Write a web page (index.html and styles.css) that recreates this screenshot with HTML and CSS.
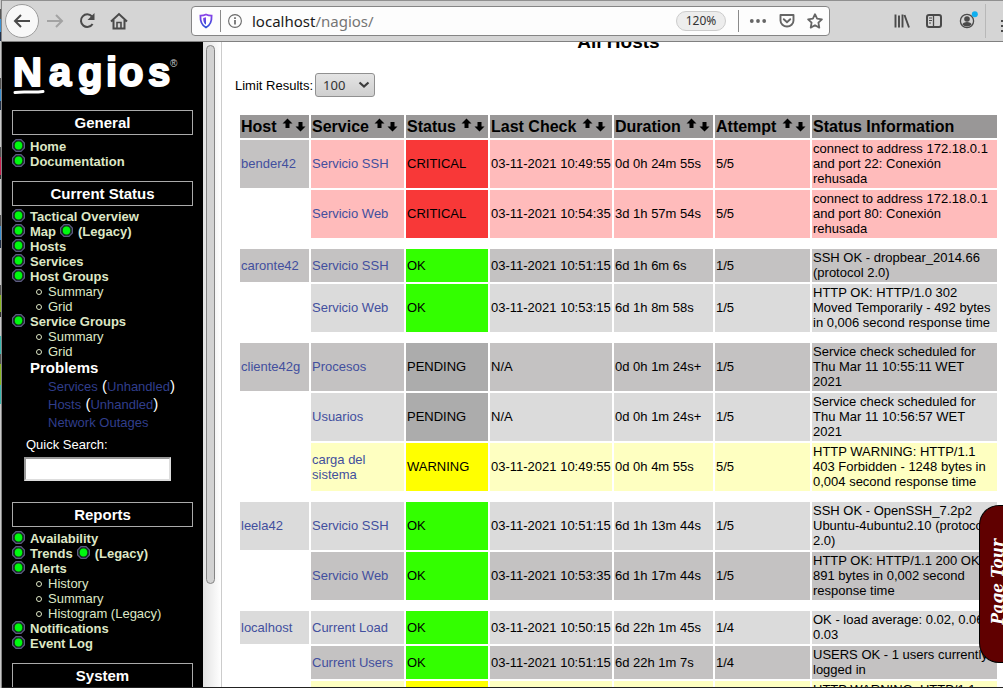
FILE: index.html
```html
<!DOCTYPE html>
<html lang="en">
<head>
<meta charset="utf-8">
<title>Nagios: localhost</title>
<link rel="stylesheet" href="styles.css">
</head>
<body>
<svg class="defs" width="0" height="0" aria-hidden="true">
  <defs>
    <symbol id="dot" viewBox="0 0 13 13">
      <path d="M4 0.600H9L12.400 4V9L9 12.400H4L0.600 9V4Z" fill="#1c1c2c" stroke="#5c5c80" stroke-width="1.200"/>
      <circle cx="6.500" cy="6.500" r="4.600" fill="#064a08"/>
      <ellipse cx="6.500" cy="6.500" rx="3.700" ry="4" fill="#00f810"/>
    </symbol>
    <symbol id="up" viewBox="0 0 11 11"><path d="M5.5 0.5L10.5 5.5H7.5V10H3.5V5.5H0.5Z" fill="#000"/></symbol>
    <symbol id="down" viewBox="0 0 11 11"><path d="M5.5 10.5L10.5 5.5H7.5V1H3.5V5.5H0.5Z" fill="#000"/></symbol>
  </defs>
</svg>
<div class="desktop-edge"></div>
<div class="window">
  <header class="toolbar">
    <div class="nav-buttons">
      <button class="back" aria-label="Back"><svg width="18" height="18" viewBox="0 0 18 18"><path d="M17 9H2M8 3L2 9l6 6" fill="none" stroke="#4a4a4a" stroke-width="2"/></svg></button>
      <button class="tool" aria-label="Forward"><svg width="18" height="18" viewBox="0 0 18 18"><path d="M1 9h15M10 3l6 6-6 6" fill="none" stroke="#a3a3a3" stroke-width="2"/></svg></button>
      <button class="tool" aria-label="Reload"><svg width="18" height="18" viewBox="0 0 18 18"><path d="M14 4.500A6.300 6.300 0 1 0 14.600 12" fill="none" stroke="#4a4a4a" stroke-width="2"/><path d="M16.500 1v7h-7z" fill="#4a4a4a"/></svg></button>
      <button class="tool" aria-label="Home"><svg width="18" height="18" viewBox="0 0 18 18"><path d="M1 9.500L9 2l8 7.500M3.500 8v8.500h11V8" fill="none" stroke="#4a4a4a" stroke-width="2"/><path d="M7 16v-5.500h4V16" fill="none" stroke="#4a4a4a" stroke-width="1.600"/></svg></button>
    </div>
    <div class="urlbar">
      <svg width="14" height="16" viewBox="0 0 14 16"><defs><linearGradient id="sh" x1="0" y1="0" x2="0" y2="1"><stop offset="0" stop-color="#8a42e8"/><stop offset="1" stop-color="#2c50d8"/></linearGradient></defs><path d="M7 1.500C9 2.400 11 2.600 12.600 2.600C12.800 8 12 12 7 14.500C2 12 1.200 8 1.400 2.600C3 2.600 5 2.400 7 1.500Z" fill="#fff" stroke="url(#sh)" stroke-width="1.800"/><path d="M7 4.300v7.500C4.500 10 4.200 8 4.200 5Z" fill="url(#sh)"/></svg>
      <span class="rule"></span>
      <svg class="info-icon" width="14" height="14" viewBox="0 0 14 14"><circle cx="7" cy="7" r="6.400" fill="none" stroke="#6a6a6a" stroke-width="1.100"/><path d="M7 6v4.500M7 3.200v1.700" stroke="#6a6a6a" stroke-width="1.700"/></svg>
      <span class="url">localhost<span class="path">/nagios/</span></span>
      <button class="zoom">120%</button>
      <span class="rule"></span>
      <button class="tool dots" aria-label="Page actions"><svg width="18" height="16" viewBox="0 0 18 16"><g fill="#666"><circle cx="2.800" cy="8" r="1.900"/><circle cx="9" cy="8" r="1.900"/><circle cx="15.200" cy="8" r="1.900"/></g></svg></button>
      <button class="tool" aria-label="Save to Pocket"><svg width="16" height="16" viewBox="0 0 16 16"><path d="M1.500 2h13v5.500a6.500 6 0 0 1-13 0z" fill="none" stroke="#666" stroke-width="1.900" stroke-linejoin="round"/><path d="M4.800 6.200L8 9.200l3.200-3" fill="none" stroke="#666" stroke-width="1.900" stroke-linecap="round"/></svg></button>
      <button class="tool" aria-label="Bookmark"><svg width="16" height="16" viewBox="0 0 16 16"><path d="M8 1.200l2.100 4.500 4.800.6-3.500 3.400.9 4.900L8 12.200l-4.300 2.400.9-4.900L1.100 6.300l4.800-.6z" fill="none" stroke="#666" stroke-width="1.800" stroke-linejoin="round"/></svg></button>
    </div>
    <div class="menu-buttons">
      <button class="tool" aria-label="Library"><svg width="16" height="16" viewBox="0 0 16 16"><path d="M1.500 1.500v13M5 2.500v12M8.500 1.500v13M10.500 2l4.500 12.500" stroke="#4a4a4a" stroke-width="1.900" fill="none"/></svg></button>
      <button class="tool" aria-label="Sidebars"><svg width="16" height="16" viewBox="0 0 16 16"><rect x="1" y="2" width="14" height="12" rx="2" fill="none" stroke="#4a4a4a" stroke-width="2"/><path d="M7.500 2v12" stroke="#4a4a4a" stroke-width="1.300"/><path d="M3 5h3M3 7.500h3M3 10h2" stroke="#4a4a4a"/></svg></button>
      <button class="tool" aria-label="Account"><svg width="20" height="20" viewBox="0 0 20 20"><circle cx="9" cy="10" r="6.600" fill="none" stroke="#4a4a4a" stroke-width="1.300"/><circle cx="9" cy="8" r="2.800" fill="#4a4a4a"/><path d="M4.500 13.500c0-3.500 9-3.500 9 0C11.500 16 6.500 16 4.500 13.500z" fill="#4a4a4a"/><circle cx="16.800" cy="3.300" r="3" fill="#10aff0"/></svg></button>
      <button class="tool more" aria-label="Menu"><svg width="10" height="16" viewBox="0 0 10 16"><path d="M0 3h10M0 8h10M0 13h10" stroke="#4a4a4a" stroke-width="2"/></svg></button>
    </div>
  </header>

  <div class="frames">
    <nav class="side">
      <a class="logo" href="#"><svg width="170" height="50" viewBox="0 0 170 50" role="img" aria-label="Nagios">
        <g fill="#fff" stroke="#fff" stroke-width="2" stroke-linejoin="round" font-family="Liberation Sans, Arial, sans-serif" font-weight="bold">
          <text y="32" font-size="40" x="1 37 66 94 107 136">Nagios</text>
        </g>
        <path d="M3 38.500C12 37 20 39 31 37.500" stroke="#fff" stroke-width="3" stroke-linecap="round" fill="none"/>
        <text x="158" y="13" fill="#ccc" font-size="10" font-family="Liberation Sans, Arial, sans-serif">®</text>
      </svg></a>

      <h2>General</h2>
      <ul class="links">
        <li><svg class="dot"><use href="#dot"/></svg><a href="#">Home</a></li>
        <li><svg class="dot"><use href="#dot"/></svg><a href="#">Documentation</a></li>
      </ul>

      <h2>Current Status</h2>
      <ul class="links status-links">
        <li><svg class="dot"><use href="#dot"/></svg><a href="#">Tactical Overview</a></li>
        <li><svg class="dot"><use href="#dot"/></svg><a href="#">Map</a><svg class="dot inner"><use href="#dot"/></svg><a href="#">(Legacy)</a></li>
        <li><svg class="dot"><use href="#dot"/></svg><a href="#">Hosts</a></li>
        <li><svg class="dot"><use href="#dot"/></svg><a href="#">Services</a></li>
        <li><svg class="dot"><use href="#dot"/></svg><a href="#">Host Groups</a></li>
        <li class="sub"><i></i><a href="#">Summary</a></li>
        <li class="sub"><i></i><a href="#">Grid</a></li>
        <li><svg class="dot"><use href="#dot"/></svg><a href="#">Service Groups</a></li>
        <li class="sub"><i></i><a href="#">Summary</a></li>
        <li class="sub"><i></i><a href="#">Grid</a></li>
      </ul>
      <h3>Problems</h3>
      <ul class="problems">
        <li><a href="#">Services</a> (<a href="#">Unhandled</a>)</li>
        <li><a href="#">Hosts</a> (<a href="#">Unhandled</a>)</li>
        <li><a href="#">Network Outages</a></li>
      </ul>
      <form class="search">
        <label for="q">Quick Search:</label>
        <input id="q" type="text">
      </form>

      <h2>Reports</h2>
      <ul class="links">
        <li><svg class="dot"><use href="#dot"/></svg><a href="#">Availability</a></li>
        <li><svg class="dot"><use href="#dot"/></svg><a href="#">Trends</a><svg class="dot inner"><use href="#dot"/></svg><a href="#">(Legacy)</a></li>
        <li><svg class="dot"><use href="#dot"/></svg><a href="#">Alerts</a></li>
        <li class="sub"><i></i><a href="#">History</a></li>
        <li class="sub"><i></i><a href="#">Summary</a></li>
        <li class="sub"><i></i><a href="#">Histogram (Legacy)</a></li>
        <li><svg class="dot"><use href="#dot"/></svg><a href="#">Notifications</a></li>
        <li><svg class="dot"><use href="#dot"/></svg><a href="#">Event Log</a></li>
      </ul>

      <h2>System</h2>
    </nav>
    <div class="scroll"><div class="thumb"></div></div>

    <main class="content">
      <h1>All Hosts</h1>
      <div class="limit">
        <label for="limit">Limit Results:</label>
        <span class="picker">
          <select id="limit"><option>100</option></select>
          <svg width="12" height="8" viewBox="0 0 12 8"><path d="M1.500 1.500L6 5.500l4.500-4" fill="none" stroke="#3c3c3c" stroke-width="2.200"/></svg>
        </span>
      </div>

      <div class="table-wrap">
      <table>
        <colgroup><col class="c-host"><col class="c-service"><col class="c-status"><col class="c-check"><col class="c-duration"><col class="c-attempt"><col></colgroup>
        <thead>
          <tr>
            <th>Host <svg class="up"><use href="#up"/></svg><svg class="down"><use href="#down"/></svg></th>
            <th>Service <svg class="up"><use href="#up"/></svg><svg class="down"><use href="#down"/></svg></th>
            <th>Status <svg class="up"><use href="#up"/></svg><svg class="down"><use href="#down"/></svg></th>
            <th>Last Check <svg class="up"><use href="#up"/></svg><svg class="down"><use href="#down"/></svg></th>
            <th>Duration <svg class="up"><use href="#up"/></svg><svg class="down"><use href="#down"/></svg></th>
            <th>Attempt <svg class="up"><use href="#up"/></svg><svg class="down"><use href="#down"/></svg></th>
            <th>Status Information</th>
          </tr>
        </thead>
        <tbody>
          <tr class="critical"><td class="even"><a href="#">bender42</a></td><td><a href="#">Servicio SSH</a></td><td class="state">CRITICAL</td><td>03-11-2021 10:49:55</td><td>0d 0h 24m 55s</td><td>5/5</td><td class="text">connect to address 172.18.0.1 and port 22: Conexión rehusada</td></tr>
          <tr class="critical"><td class="none"></td><td><a href="#">Servicio Web</a></td><td class="state">CRITICAL</td><td>03-11-2021 10:54:35</td><td>3d 1h 57m 54s</td><td>5/5</td><td class="text">connect to address 172.18.0.1 and port 80: Conexión rehusada</td></tr>
          <tr class="gap"><td colspan="7"></td></tr>
          <tr class="even ok"><td><a href="#">caronte42</a></td><td><a href="#">Servicio SSH</a></td><td class="state">OK</td><td>03-11-2021 10:51:15</td><td>6d 1h 6m 6s</td><td>1/5</td><td class="text">SSH OK - dropbear_2014.66 (protocol 2.0)</td></tr>
          <tr class="odd ok"><td class="none"></td><td><a href="#">Servicio Web</a></td><td class="state">OK</td><td>03-11-2021 10:53:15</td><td>6d 1h 8m 58s</td><td>1/5</td><td class="text">HTTP OK: HTTP/1.0 302 Moved Temporarily - 492 bytes in 0,006 second response time</td></tr>
          <tr class="gap"><td colspan="7"></td></tr>
          <tr class="even pending"><td><a href="#">cliente42g</a></td><td><a href="#">Procesos</a></td><td class="state">PENDING</td><td>N/A</td><td>0d 0h 1m 24s+</td><td>1/5</td><td class="text">Service check scheduled for Thu Mar 11 10:55:11 WET 2021</td></tr>
          <tr class="odd pending"><td class="none"></td><td><a href="#">Usuarios</a></td><td class="state">PENDING</td><td>N/A</td><td>0d 0h 1m 24s+</td><td>1/5</td><td class="text">Service check scheduled for Thu Mar 11 10:56:57 WET 2021</td></tr>
          <tr class="warning"><td class="none"></td><td class="text"><a href="#">carga del sistema</a></td><td class="state">WARNING</td><td>03-11-2021 10:49:55</td><td>0d 0h 4m 55s</td><td>5/5</td><td class="text">HTTP WARNING: HTTP/1.1 403 Forbidden - 1248 bytes in 0,004 second response time</td></tr>
          <tr class="gap"><td colspan="7"></td></tr>
          <tr class="odd ok"><td><a href="#">leela42</a></td><td><a href="#">Servicio SSH</a></td><td class="state">OK</td><td>03-11-2021 10:51:15</td><td>6d 1h 13m 44s</td><td>1/5</td><td class="text">SSH OK - OpenSSH_7.2p2 Ubuntu-4ubuntu2.10 (protocol 2.0)</td></tr>
          <tr class="even ok"><td class="none"></td><td><a href="#">Servicio Web</a></td><td class="state">OK</td><td>03-11-2021 10:53:35</td><td>6d 1h 17m 44s</td><td>1/5</td><td class="text">HTTP OK: HTTP/1.1 200 OK - 891 bytes in 0,002 second response time</td></tr>
          <tr class="gap"><td colspan="7"></td></tr>
          <tr class="odd ok"><td><a href="#">localhost</a></td><td><a href="#">Current Load</a></td><td class="state">OK</td><td>03-11-2021 10:50:15</td><td>6d 22h 1m 45s</td><td>1/4</td><td class="text">OK - load average: 0.02, 0.06, 0.03</td></tr>
          <tr class="even ok"><td class="none"></td><td><a href="#">Current Users</a></td><td class="state">OK</td><td>03-11-2021 10:51:15</td><td>6d 22h 1m 7s</td><td>1/4</td><td class="text">USERS OK - 1 users currently logged in</td></tr>
          <tr class="warning"><td class="none"></td><td></td><td class="state"></td><td></td><td></td><td></td><td class="text">HTTP WARNING: HTTP/1.1 403 Forbidden</td></tr>
        </tbody>
      </table>
      </div>
      <button class="tour"><span>Page Tour</span></button>
    </main>
  </div>
</div>
</body>
</html>
```
FILE: styles.css
```css
* { box-sizing: border-box; }

body {
  margin: 0;
  display: flex;
  height: 100vh;
  overflow: hidden;
  background: #fff;
  color: #000;
  font: 13px/15px "Liberation Sans", Arial, sans-serif;
}

button { margin: 0; padding: 0; border: 0; background: none; font: inherit; color: inherit; }
svg { display: block; }
a { text-decoration: none; }
ul { list-style: none; margin: 0; padding: 0; }
.defs { position: absolute; }

/* slice of the launcher showing beside the window */
.desktop-edge {
  flex: none;
  width: 2px;
  border-right: 1px solid #858585;
  background: linear-gradient(#c9c9c9 0 9px, #555 9px 19px, #3a8fd0 19px 32px, #20304a 32px 41px,
    #c9c9c9 41px 78px, #555 78px 89px, #3a8fd0 89px 101px, #20304a 101px 110px,
    #c9c9c9 110px 147px, #555 147px 157px, #cc2050 157px 175px, #333 175px 179px,
    #c9c9c9 179px 215px, #555 215px 226px, #3a8fd0 226px 240px, #20304a 240px 248px,
    #c9c9c9 248px 285px, #555 285px 295px, #8ab820 295px 312px, #333 312px 317px,
    #c9c9c9 317px 336px, #38b8b0 336px 354px, #555 354px 364px, #8ab820 364px 385px,
    #38b8b0 385px 404px, #c9c9c9 404px);
}

.window { flex: 1; min-width: 0; display: flex; flex-direction: column; border-bottom: 1px solid #222; }

.toolbar {
  flex: none;
  display: flex;
  align-items: center;
  height: 42px;
  padding-left: 3px;
  border-top: 1px solid #909090;
  border-bottom: 1px solid #808080;
  background: #d5d5d5;
}
.nav-buttons { display: flex; align-items: center; gap: 14px; margin-right: 63px; }
.back {
  display: grid;
  place-items: center;
  width: 34px;
  height: 34px;
  border: 1px solid #9c9c9c;
  border-radius: 50%;
  background: #f8f8f8;
}
.back + .tool { margin-left: -7px; }
.urlbar {
  flex: 1;
  display: flex;
  align-items: center;
  height: 30px;
  padding: 0 6px 0 7px;
  border: 1px solid #858585;
  border-radius: 4px;
  background: #fdfdfd;
}
.rule { width: 1px; height: 22px; margin-left: 7px; background: #8a8a8a; }
.info-icon { margin-left: 7px; }
.url { flex: 1; margin-left: 10px; font: 15px/20px "Noto Sans", sans-serif; color: #1a1a1a; }
.path { color: #757575; }
.zoom {
  width: 50px;
  height: 20px;
  margin-right: 5px;
  border: 1px solid #ccc;
  border-radius: 10px;
  background: #ededed;
  color: #333;
  font: 12px/18px "Noto Sans", sans-serif;
}
.dots { margin-left: 10px; }
.urlbar .tool + .tool { margin-left: 12px; }
.menu-buttons { display: flex; align-items: center; gap: 16px; margin-left: 64px; }
.menu-buttons .more { width: 18px; height: 34px; padding: 9px 0 0 15px; margin-left: -9px; border-left: 1px solid #b8b8b8; overflow: hidden; }

.frames { flex: 1; min-height: 0; display: flex; }

.side {
  flex: none;
  width: 201px;
  padding: 12px 10px 0;
  overflow: hidden;
  background: #000;
  color: #fff;
}
.logo { display: block; height: 56px; }
.side h2 {
  height: 25px;
  margin: 0;
  border: 1px solid #aaa;
  font-size: 15px;
  line-height: 24px;
  text-align: center;
}
.links { padding: 4px 0 12px; font-weight: bold; }
.status-links { padding: 3px 0 0; }
.links li { display: flex; align-items: center; height: 15px; }
.links a { color: #dee7c6; }
.dot { flex: none; width: 13px; height: 13px; margin: 0 5px 2px 0; }
.dot.inner { margin-left: 4px; }
.links .sub { padding-left: 24px; font-weight: normal; }
.sub i { width: 6px; height: 6px; margin: 1px 6px 0 0; border: 1px solid #dee7c6; border-radius: 50%; }
.side h3 { margin: 0 0 0 18px; font-size: 15px; line-height: 18px; }
.problems { padding-left: 36px; font-size: 15px; line-height: 18px; }
.problems li { height: 18px; }
.problems a { color: #303e8c; font-size: 13px; }
.search { display: flex; flex-direction: column; align-items: flex-start; padding: 6px 0 21px 12px; }
.search label { padding-left: 2px; line-height: 15px; }
.search input {
  width: 147px;
  height: 24px;
  margin-top: 5px;
  border: 2px solid;
  border-color: #999 #ddd #ddd #999;
  background: #fff;
}

.scroll {
  flex: none;
  width: 18px;
  padding: 3px 6px 0 3px;
  background: linear-gradient(90deg, #e2e2e2, #fff);
}
.thumb { height: 84%; border: 1px solid #858585; border-radius: 5px; background: #d2d2d2; }

.content {
  flex: 1;
  min-width: 0;
  position: relative;
  overflow: hidden;
  border-left: 1px solid #ccc;
}
h1 { margin: -10px 1px 0 13px; font-size: 19px; line-height: 20px; text-align: center; }
.limit { display: flex; align-items: center; gap: 2px; margin: 21px 0 16px; padding-left: 13px; }
.picker { display: grid; align-items: center; }
.picker select, .picker svg { grid-area: 1 / 1; }
.picker svg { justify-self: end; margin-right: 5px; pointer-events: none; }
.picker select {
  appearance: none;
  width: 60px;
  height: 24px;
  margin: 0;
  padding: 0 7px;
  border: 1px solid #909090;
  border-radius: 3px;
  background: linear-gradient(#e4e4e4, #cfcfcf);
  color: #333;
  font: 13px/18px "Noto Sans", sans-serif;
}

.table-wrap { padding: 0 4px 0 16px; }
table { width: 100%; table-layout: fixed; border-spacing: 2px; }
.c-host { width: 69px; }
.c-service { width: 93px; }
.c-status { width: 82px; }
.c-check { width: 122px; }
.c-duration { width: 99px; }
.c-attempt { width: 95px; }
th {
  height: 23px;
  padding: 1px;
  background: #999797;
  font-size: 16px;
  line-height: 20px;
  text-align: left;
  white-space: nowrap;
}
th svg { display: inline-block; width: 11px; height: 11px; }
.up { margin-left: 1px; vertical-align: 3px; }
.down { margin-left: 2px; vertical-align: 0; }
td { padding: 1px 1px 2px; white-space: nowrap; }
.text { white-space: normal; }
td a { color: #424f9e; }
.gap td { height: 7px; padding: 0; background: none; }
.even td, td.even { background: #c4c2c2; }
.odd td { background: #dbdbdb; }
.critical td { background: #ffbbbb; }
.warning td { background: #feffc1; }
.critical td.even { background: #c4c2c2; }
.ok .state { background: #33ff00; }
.critical .state { background: #f83838; }
.pending .state { background: #acacac; }
.warning .state { background: #ffff00; }
td.none, tr td.none { background: none; }

.tour {
  position: absolute;
  right: 0;
  top: 463px;
  width: 24px;
  height: 158px;
  border: 1px solid #000;
  border-right: 0;
  border-radius: 20px 0 0 20px;
  background: #600000;
  color: #fff;
  font: italic bold 17px/20px "DejaVu Serif Condensed", "DejaVu Serif", serif;
}
.tour span { writing-mode: vertical-rl; rotate: 180deg; margin-left: 7px; }
```
